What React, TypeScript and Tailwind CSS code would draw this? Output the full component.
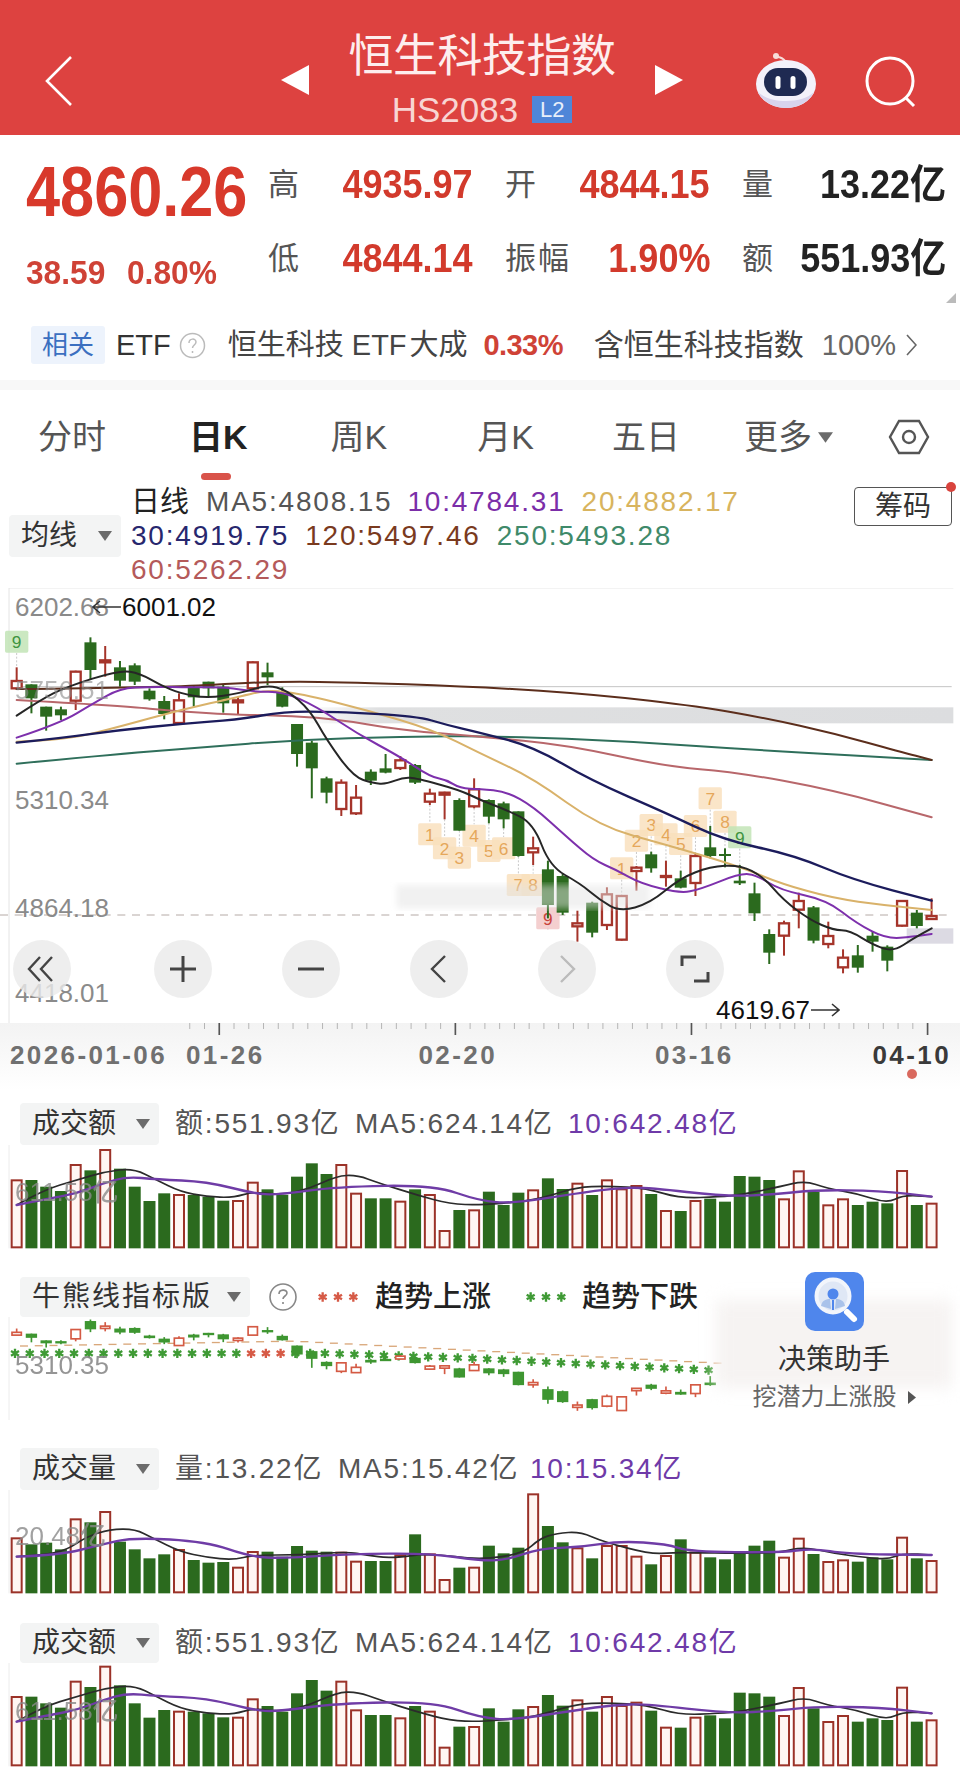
import type { ReactNode } from "react";

// Daily candles: [up, high, bodyTop, bodyBottom, low], plotted at 3 units per pixel
type Candle = [0 | 1, number, number, number, number];

const CANDLES: Candle[] = [
  [1, 232, 270, 298, 300], [0, 283, 283, 325, 370], [0, 350, 350, 380, 422], [0, 350, 358, 376, 390],
  [1, 242, 242, 335, 360], [0, 142, 157, 240, 268], [1, 168, 208, 220, 260], [0, 213, 232, 272, 290],
  [0, 220, 226, 275, 285], [0, 295, 302, 328, 332], [0, 318, 333, 372, 388], [1, 310, 328, 402, 405],
  [0, 285, 292, 322, 350], [0, 275, 275, 295, 320], [0, 285, 290, 340, 368], [1, 320, 328, 340, 372],
  [1, 214, 214, 298, 300], [0, 218, 247, 262, 285], [0, 292, 305, 350, 352], [0, 402, 402, 492, 530],
  [0, 452, 458, 535, 625], [0, 560, 565, 608, 640], [1, 568, 575, 660, 678], [1, 585, 620, 673, 675],
  [0, 538, 545, 572, 585], [0, 492, 535, 548, 550], [1, 498, 508, 537, 540], [0, 522, 525, 578, 582],
  [1, 596, 608, 638, 645], [1, 605, 605, 617, 688], [0, 625, 630, 722, 722], [1, 565, 595, 652, 655],
  [0, 628, 630, 680, 700], [0, 635, 640, 688, 715], [0, 664, 664, 798, 800], [1, 740, 772, 790, 825],
  [0, 812, 838, 945, 985], [0, 852, 858, 968, 975], [1, 962, 997, 1012, 1055], [0, 935, 938, 1028, 1042],
  [1, 892, 910, 1008, 1020], [1, 915, 915, 1052, 1052], [1, 828, 830, 846, 902], [0, 785, 793, 835, 848],
  [1, 812, 855, 862, 890], [0, 842, 865, 893, 895], [1, 790, 795, 882, 918], [0, 708, 772, 798, 805],
  [0, 775, 792, 798, 832], [0, 825, 872, 880, 885], [0, 878, 910, 970, 993], [0, 1018, 1032, 1088, 1122],
  [1, 992, 997, 1040, 1097], [1, 908, 930, 962, 1015], [0, 948, 952, 1052, 1060], [1, 995, 1035, 1065, 1075],
  [1, 1078, 1100, 1135, 1150], [0, 1065, 1096, 1133, 1148], [0, 1025, 1037, 1055, 1085], [0, 1066, 1070, 1112, 1144],
  [1, 930, 930, 1010, 1010], [0, 960, 968, 1008, 1015], [1, 925, 975, 990, 990],
];

const AMOUNT_TOPS = [
  268, 270, 290, 303, 222, 241, 177, 236, 290, 333, 310, 312, 315, 320, 332, 330,
  275, 298, 315, 260, 220, 252, 222, 308, 325, 325, 332, 298, 312, 420, 360, 358,
  305, 345, 308, 298, 265, 297, 278, 315, 268, 295, 285, 312, 360, 363, 330, 326,
  335, 258, 260, 270, 325, 241, 305, 343, 325, 345, 335, 340, 240, 345, 338,
];

const VOLUME_TOPS = [
  322, 343, 338, 358, 265, 277, 243, 335, 358, 385, 373, 357, 390, 398, 396, 410,
  363, 365, 380, 348, 362, 365, 365, 392, 393, 393, 373, 313, 370, 447, 413, 410,
  347, 370, 353, 190, 288, 337, 352, 385, 345, 345, 377, 403, 375, 328, 365, 382,
  388, 370, 347, 332, 380, 323, 372, 393, 388, 395, 382, 388, 320, 385, 390,
];

type Pt = [number, number];

const MA5: Pt[] = [[50, 377], [120, 330], [200, 290], [360, 240], [420, 250], [480, 285], [540, 310], [620, 325], [720, 310], [800, 285], [860, 300], [930, 360], [980, 450], [1060, 560], [1120, 580], [1160, 582], [1210, 562], [1250, 565], [1380, 600], [1440, 630], [1520, 660], [1600, 700], [1650, 830], [1740, 880], [1800, 930], [1860, 965], [1950, 940], [2040, 865], [2130, 830], [2220, 825], [2290, 860], [2350, 930], [2430, 990], [2500, 1020], [2550, 1022], [2620, 1065], [2680, 1085], [2740, 1045], [2795, 1015]];
const MA10: Pt[] = [[50, 443], [180, 400], [280, 340], [360, 295], [450, 290], [580, 292], [680, 292], [760, 305], [850, 305], [950, 350], [1070, 430], [1200, 500], [1290, 560], [1340, 570], [1380, 595], [1440, 597], [1520, 605], [1600, 650], [1700, 740], [1780, 810], [1850, 840], [1920, 880], [2040, 910], [2100, 898], [2220, 850], [2270, 855], [2340, 900], [2480, 930], [2570, 1000], [2660, 1047], [2740, 1040], [2795, 1032]];
const MA20: Pt[] = [[50, 455], [200, 450], [360, 410], [540, 360], [720, 320], [800, 300], [900, 310], [1100, 360], [1300, 420], [1440, 490], [1600, 565], [1800, 710], [2000, 765], [2220, 830], [2340, 880], [2500, 925], [2650, 945], [2795, 960]];
const MA30: Pt[] = [[50, 458], [180, 445], [360, 420], [540, 402], [720, 388], [850, 365], [1000, 365], [1250, 378], [1340, 405], [1440, 428], [1600, 470], [1770, 570], [2000, 670], [2170, 750], [2380, 795], [2560, 870], [2795, 932]];
const MA60: Pt[] = [[50, 330], [360, 347], [540, 365], [720, 375], [800, 375], [1000, 385], [1200, 420], [1440, 440], [1700, 465], [2000, 530], [2200, 545], [2500, 600], [2795, 682]];
const MA120: Pt[] = [[50, 297], [480, 293], [800, 275], [1000, 275], [1440, 290], [1800, 315], [2100, 350], [2300, 385], [2500, 430], [2700, 485], [2795, 510]];
const MA250: Pt[] = [[50, 521], [300, 497], [600, 472], [891, 450], [1200, 440], [1500, 438], [1900, 455], [2300, 482], [2795, 510]];

const AMOUNT_MA5: Pt[] = [[50, 345], [130, 300], [230, 270], [315, 245], [400, 235], [470, 270], [540, 305], [620, 320], [700, 323], [760, 305], [850, 315], [930, 295], [1010, 258], [1070, 255], [1140, 280], [1250, 315], [1350, 342], [1440, 345], [1570, 335], [1640, 320], [1730, 292], [1820, 288], [1940, 295], [2040, 325], [2160, 320], [2220, 315], [2340, 290], [2415, 272], [2480, 295], [2570, 310], [2660, 340], [2710, 315], [2795, 320]];
const AMOUNT_MA10: Pt[] = [[50, 345], [150, 325], [230, 310], [310, 280], [380, 260], [470, 268], [620, 275], [760, 310], [830, 315], [1010, 290], [1300, 285], [1440, 333], [1540, 340], [1730, 310], [1840, 295], [1940, 292], [2180, 320], [2340, 312], [2440, 300], [2640, 302], [2795, 320]];
const VOLUME_MA5: Pt[] = [[50, 380], [130, 375], [200, 360], [260, 320], [330, 298], [405, 297], [460, 325], [540, 365], [620, 382], [700, 390], [760, 375], [900, 375], [1040, 365], [1100, 375], [1170, 385], [1290, 370], [1440, 390], [1570, 370], [1620, 325], [1670, 310], [1740, 305], [1810, 335], [1950, 372], [2020, 368], [2080, 368], [2210, 370], [2340, 368], [2410, 350], [2500, 370], [2600, 383], [2665, 388], [2710, 370], [2795, 375]];
const VOLUME_MA10: Pt[] = [[50, 380], [180, 375], [300, 345], [400, 322], [620, 335], [750, 380], [850, 385], [1050, 372], [1290, 370], [1440, 392], [1520, 390], [1620, 355], [1740, 352], [1860, 333], [2000, 342], [2070, 365], [2340, 368], [2440, 355], [2540, 372], [2795, 375]];

// Sequence counters sitting on the candles: [candle, centre y, label, tone]
const MARKERS: [number, number, string, "amber" | "green" | "pink"][] = [
  [0, 155, "9", "green"],
  [28, 733, "1", "amber"], [29, 775, "2", "amber"], [30, 803, "3", "amber"], [31, 737, "4", "amber"],
  [32, 783, "5", "amber"], [33, 775, "6", "amber"], [34, 885, "7", "amber"], [35, 885, "8", "amber"],
  [36, 985, "9", "pink"],
  [41, 835, "1", "amber"], [42, 752, "2", "amber"], [43, 705, "3", "amber"], [44, 733, "4", "amber"],
  [45, 762, "5", "amber"], [46, 708, "6", "amber"], [47, 625, "7", "amber"], [48, 695, "8", "amber"],
  [49, 742, "9", "green"],
];

const TONES = {
  amber: { fill: "#f9dfbc", text: "#e5a75b" },
  green: { fill: "#bfe3b3", text: "#3f9440" },
  pink: { fill: "#f2c4c4", text: "#c8443a" },
};

const RED = "#a5342a";
const GREEN = "#2b6a1e";

const xAt = (i: number) => 50 + 44.27 * i;

function smooth(points: Pt[]) {
  let d = `M${points[0][0]} ${points[0][1]}`;
  for (let i = 1; i < points.length - 1; i++) {
    const mx = (points[i][0] + points[i + 1][0]) / 2;
    const my = (points[i][1] + points[i + 1][1]) / 2;
    d += ` Q${points[i][0]} ${points[i][1]} ${mx} ${my}`;
  }
  const last = points[points.length - 1];
  return `${d} L${last[0]} ${last[1]}`;
}

function Line({ points, color, width = 6 }: { points: Pt[]; color: string; width?: number }) {
  return <path d={smooth(points)} fill="none" stroke={color} strokeWidth={width} strokeLinejoin="round" strokeLinecap="round" />;
}

function Caret({ className = "" }: { className?: string }) {
  return (
    <svg className={className} viewBox="0 0 14 10" fill="#6b6b6b">
      <path d="M0 0h14L7 10z" />
    </svg>
  );
}

function DropTag({ label, className }: { label: string; className: string }) {
  return (
    <div className={`flex items-center bg-[#f3f4f4] rounded-[4px] text-[#333] text-[28px] leading-none ${className}`}>
      <span className="ml-[12px]">{label}</span>
      <Caret className="w-[14px] h-[10px] ml-auto mr-[9px]" />
    </div>
  );
}

function NavCircle({ children, className = "" }: { children: ReactNode; className?: string }) {
  return (
    <div className={`w-[58px] h-[58px] rounded-full bg-[#eaeaea]/80 flex items-center justify-center ${className}`}>
      <svg className="w-[34px] h-[34px]" viewBox="0 0 34 34" fill="none" stroke="currentColor" strokeWidth="2.4">
        {children}
      </svg>
    </div>
  );
}

function AxisLabel({ className, children }: { className: string; children: ReactNode }) {
  return <span className={`absolute left-[15px] text-[26px] leading-none font-medium text-[#8a8a8a] ${className}`}>{children}</span>;
}

function Star({ x, y, color }: { x: number; y: number; color: string }) {
  return (
    <path
      d={`M${x} ${y - 14}V${y + 14}M${x - 12} ${y - 7}L${x + 12} ${y + 7}M${x - 12} ${y + 7}L${x + 12} ${y - 7}`}
      stroke={color}
      strokeWidth="7"
    />
  );
}

function Legend({ color }: { color: string }) {
  return (
    <svg className="w-[42px] h-[14px]" viewBox="0 0 126 42">
      <Star x={17} y={21} color={color} />
      <Star x={63} y={21} color={color} />
      <Star x={109} y={21} color={color} />
    </svg>
  );
}

function MainChart() {
  return (
    <svg className="block w-[960px] h-[435px]" viewBox="0 -6 2880 1305">
      <defs>
        <linearGradient id="band" x1="0" x2="1" y1="0" y2="0">
          <stop offset="0" stopColor="#dfe0e1" stopOpacity="0" />
          <stop offset="0.12" stopColor="#dfe0e1" />
          <stop offset="1" stopColor="#dcdddf" />
        </linearGradient>
        <filter id="soft">
          <feGaussianBlur stdDeviation="10" />
        </filter>
      </defs>
      <path d="M27 -6H2860" stroke="#e8e8e8" strokeWidth="3" />
      <path d="M27 -6V1299" stroke="#e4e4e4" strokeWidth="3" />
      <path d="M50 290H2855" stroke="#c4c4c4" strokeWidth="3" />
      <rect x="900" y="352" width="1960" height="48" fill="url(#band)" />
      <rect x="2720" y="1015" width="140" height="46" fill="#dcdae3" />
      <path d="M0 975H2840" stroke="#b5aaa6" strokeWidth="3" strokeDasharray="24 20" />

      {MARKERS.map(([i, y, label, tone]) => {
        const c = CANDLES[i];
        const below = y > c[4];
        return (
          <g key={`${i}-${y}`}>
            <path
              d={below ? `M${xAt(i)} ${c[4]}V${y - 34}` : `M${xAt(i)} ${y + 34}V${c[1]}`}
              stroke="#c9c9c9"
              strokeWidth="3"
              strokeDasharray="6 5"
            />
            <rect x={xAt(i) - 35} y={y - 33} width="70" height="66" rx="5" fill={TONES[tone].fill} fillOpacity="0.82" />
            <text x={xAt(i)} y={y + 19} textAnchor="middle" fontSize="52" fill={TONES[tone].text}>
              {label}
            </text>
          </g>
        );
      })}

      {CANDLES.map(([up, high, top, bottom, low], i) => {
        const x = xAt(i);
        const color = up ? RED : GREEN;
        return (
          <g key={i}>
            <path d={`M${x} ${high}V${low}`} stroke={color} strokeWidth="6" />
            {up ? (
              <rect x={x - 15} y={top + 3} width="30" height={Math.max(bottom - top - 6, 3)} fill="#fff" stroke={color} strokeWidth="7" />
            ) : (
              <rect x={x - 18} y={top} width="36" height={bottom - top} fill={color} />
            )}
          </g>
        );
      })}

      <rect x="1190" y="885" width="760" height="70" fill="#e4e4e4" fillOpacity="0.5" filter="url(#soft)" />

      <Line points={MA250} color="#2f6f5b" />
      <Line points={MA120} color="#5c2e1c" />
      <Line points={MA60} color="#b8676b" />
      <Line points={MA20} color="#d9b26a" />
      <Line points={MA30} color="#1c1c5c" width={7} />
      <Line points={MA10} color="#7d30ac" />
      <Line points={MA5} color="#262626" />
    </svg>
  );
}

function Ruler() {
  return (
    <svg className="block w-[960px] h-[14px]" viewBox="0 0 2880 42">
      {CANDLES.map((_, i) => {
        if (i < 12) return null;
        const major = (i - 14) % 16 === 0 || i === 62;
        return <path key={i} d={`M${xAt(i) - 12} 0V${major ? 36 : 18}`} stroke={major ? "#555" : "#b5b5b5"} strokeWidth={major ? 5 : 3} />;
      })}
    </svg>
  );
}

function BarChart({ tops, ma5, ma10, viewY, className }: { tops: number[]; ma5: Pt[]; ma10: Pt[]; viewY: number; className: string }) {
  const base = viewY + 310;
  return (
    <svg className={`block w-[960px] ${className}`} viewBox={`0 ${viewY} 2880 330`}>
      <path d={`M27 ${viewY}V${base}`} stroke="#ececec" strokeWidth="3" />
      {tops.map((top, i) => {
        const up = CANDLES[i][0] === 1;
        return up ? (
          <rect key={i} x={xAt(i) - 15} y={top + 3} width="30" height={base - top - 6} fill="#fff6f3" stroke="#9b3228" strokeWidth="6" />
        ) : (
          <rect key={i} x={xAt(i) - 18} y={top} width="36" height={base - top} fill={GREEN} />
        );
      })}
      <Line points={ma5} color="#2b2b2b" width={5} />
      <Line points={ma10} color="#6f3ca6" width={7} />
    </svg>
  );
}

// Bull/bear strip reuses the daily candles, squeezed into a narrow band
function TrendStrip() {
  const my = (y: number) => 730 + (y - 280) * 0.3;
  const starY = (i: number) => (i < 22 ? 790 : i < 32 ? 790 + (i - 21) * 1.5 : 805 + (i - 31) * 2.2);
  const dashY = (i: number) => (i < 19 ? 768 - i * 0.8 : 755 + (i - 19) * 2.3);
  return (
    <svg className="block w-[960px] h-[120px]" viewBox="0 681 2880 360">
      <path d="M27 681V990" stroke="#ececec" strokeWidth="3" />
      {CANDLES.slice(0, 48).map((_, i) => (
        <path key={i} d={`M${xAt(i) + 10} ${dashY(i)}h24`} stroke="#d9a77a" strokeWidth="4" />
      ))}
      {CANDLES.slice(0, 48).map((_, i) => (
        <Star key={i} x={xAt(i) - 5} y={starY(i)} color={i >= 16 && i <= 18 ? "#d65a46" : "#3f9a35"} />
      ))}
      {CANDLES.slice(0, 48).map(([up, high, top, bottom, low], i) => {
        const x = xAt(i);
        const color = up ? "#d45a44" : "#3e9631";
        const t = my(top);
        const h = Math.max(my(bottom) - t, 7);
        return (
          <g key={i}>
            <path d={`M${x} ${my(high)}V${my(low)}`} stroke={color} strokeWidth="5" />
            {up ? (
              <rect x={x - 14} y={t} width="28" height={h} fill="#fff" stroke={color} strokeWidth="5" />
            ) : (
              <rect x={x - 17} y={t} width="34" height={h} fill={color} />
            )}
          </g>
        );
      })}
    </svg>
  );
}

function RobotIcon() {
  return (
    <svg className="w-[62px] h-[56px]" viewBox="0 0 62 56">
      <circle cx="21" cy="4" r="3" fill="#f7dcd8" />
      <path d="M22 5c3 0 6 1 9 5" stroke="#f7dcd8" strokeWidth="2" fill="none" />
      <ellipse cx="31" cy="32" rx="30" ry="24" fill="#f3f1fa" />
      <path d="M3 40c4 9 15 16 28 16s24-7 28-16c-6 6-16 9-28 9S9 46 3 40z" fill="#d8d3ec" />
      <rect x="9" y="16" width="43" height="28" rx="14" fill="#1f2a52" />
      <rect x="20.5" y="24" width="5" height="13" rx="2.5" fill="#fff" />
      <rect x="35.5" y="24" width="5" height="13" rx="2.5" fill="#fff" />
    </svg>
  );
}

function AssistantIcon() {
  return (
    <svg className="w-[59px] h-[59px]" viewBox="0 0 59 59">
      <rect width="59" height="59" rx="10" fill="#4f86ec" />
      <circle cx="28" cy="24" r="16.5" fill="#dfe7f5" stroke="#f2f5fb" strokeWidth="4" />
      <circle cx="28" cy="22" r="5.5" fill="#4f86ec" />
      <path d="M16 34c1-5 4-7 9-7l1 10zM40 34c-1-5-4-7-9-7l-1 10z" fill="#a9c2ea" />
      <path d="M28 28v10" stroke="#4f86ec" strokeWidth="2" />
      <path d="M42 40l7 7" stroke="#fff" strokeWidth="6" strokeLinecap="round" />
    </svg>
  );
}

const NUM = "inline-block origin-right scale-x-[.9] text-[40px] leading-none font-bold whitespace-nowrap";

function StatCell({ label, value, dark }: { label: string; value: string; dark?: boolean }) {
  return (
    <div className="flex items-center justify-between">
      <span className="text-[31px] leading-none text-[#555]">{label}</span>
      <span className={`${NUM} ${dark ? "text-[#222]" : "text-[#d23a2c]"}`}>{value}</span>
    </div>
  );
}

function InfoText({ className, children }: { className: string; children: ReactNode }) {
  return <span className={`text-[28px] leading-none tracking-[1.8px] whitespace-nowrap ${className}`}>{children}</span>;
}

export default function App() {
  return (
    <div className="relative w-[960px] h-[1789px] overflow-hidden bg-white font-['Liberation_Sans','Noto_Sans_CJK_SC',sans-serif]">
      {/* Title bar */}
      <header className="relative h-[135px] bg-[#dd4240] text-white">
        <svg className="absolute left-[44px] top-[55px] w-[30px] h-[52px]" viewBox="0 0 30 52" fill="none" stroke="#fff" strokeWidth="2.6">
          <path d="M27 2L3 26l24 24" />
        </svg>
        <div className="flex justify-center items-start pt-[34px] gap-[37px] w-[666px] ml-[149px]">
          <svg className="w-[28px] h-[30px] mt-[31px]" viewBox="0 0 28 30" fill="#fff">
            <path d="M28 0v30L0 15z" />
          </svg>
          <div className="flex flex-col items-center w-[272px]">
            <div className="text-[45px] leading-[46px] text-[#fdeeee] tracking-[-0.5px] whitespace-nowrap">恒生科技指数</div>
            <div className="flex items-center mt-[16px] h-[27px]">
              <span className="text-[35px] leading-none text-[#f8d5d3]">HS2083</span>
              <span className="ml-[14px] w-[40px] h-[27px] bg-[#4f86d8] text-[#e8effa] text-[22px] leading-[27px] text-center">L2</span>
            </div>
          </div>
          <svg className="w-[28px] h-[30px] mt-[31px]" viewBox="0 0 28 30" fill="#fff">
            <path d="M0 0v30l28-15z" />
          </svg>
        </div>
        <div className="absolute left-[755px] top-[52px]">
          <RobotIcon />
        </div>
        <svg className="absolute left-[864px] top-[55px] w-[54px] h-[54px]" viewBox="0 0 54 54" fill="none" stroke="#fff" strokeWidth="3">
          <circle cx="26" cy="26" r="23" />
          <path d="M41 42l9 9" />
        </svg>
      </header>

      {/* Quote summary */}
      <section className="relative flex h-[175px]">
        <div className="w-[268px] pl-[26px]">
          <div className="mt-[27px] inline-block origin-left scale-x-[.875] text-[70px] leading-[60px] font-bold text-[#d8392b] whitespace-nowrap">4860.26</div>
          <div className="flex mt-[33px] text-[33px] leading-none text-[#cf4236] font-bold">
            <span className="inline-block origin-left scale-x-[.96]">38.59</span>
            <span className="ml-[18px] inline-block origin-left scale-x-[.96]">0.80%</span>
          </div>
        </div>
        <div className="grid grid-cols-[205px_205px_204px] gap-x-[32px] auto-rows-[74px] mt-[12px]">
          <StatCell label="高" value="4935.97" />
          <StatCell label="开" value="4844.15" />
          <StatCell label="量" value="13.22亿" dark />
          <StatCell label="低" value="4844.14" />
          <div className="flex items-center justify-between">
            <span className="text-[31px] leading-none text-[#555] tracking-[2px]">振幅</span>
            <span className={`${NUM} text-[#d23a2c]`}>1.90%</span>
          </div>
          <StatCell label="额" value="551.93亿" dark />
        </div>
        <svg className="absolute left-[946px] top-[158px] w-[10px] h-[10px]" viewBox="0 0 10 10" fill="#bbb">
          <path d="M10 0v10H0z" />
        </svg>
      </section>

      {/* Related ETF row */}
      <section className="flex items-center h-[38px] mt-[16px] ml-[31px] text-[29px] leading-none text-[#444] whitespace-nowrap">
        <span className="flex items-center justify-center w-[74px] h-[38px] bg-[#edf3fc] rounded-[3px] text-[26px] text-[#3b6fc0]">相关</span>
        <span className="ml-[11px] text-[#333]">ETF</span>
        <svg className="ml-[8px] w-[27px] h-[27px]" viewBox="0 0 27 27" fill="none" stroke="#bbb" strokeWidth="1.5">
          <circle cx="13.5" cy="13.5" r="12" />
          <path d="M10 11c0-5 7-5 7-1 0 3-3.5 3-3.5 6M13.5 19v2" />
        </svg>
        <span className="ml-[22px]">恒生科技</span>
        <span className="ml-[8px]">ETF</span>
        <span className="ml-[3px]">大成</span>
        <span className="ml-[16px] text-[#cf4236] font-bold tracking-[-0.6px]">0.33%</span>
        <span className="ml-[31px] text-[30px]">含恒生科技指数</span>
        <span className="ml-[18px] text-[#666]">100%</span>
        <svg className="ml-[10px] w-[11px] h-[22px]" viewBox="0 0 11 22" fill="none" stroke="#666" strokeWidth="1.6">
          <path d="M1 1l9 10-9 10" />
        </svg>
      </section>

      <div className="h-[10px] mt-[16px] bg-[#f8f8f8]" />

      {/* Period tabs */}
      <nav className="relative flex items-center h-[70px] mt-[12px] text-[34px] leading-none text-[#555]">
        <span className="ml-[38px]">分时</span>
        <span className="ml-[83px] font-bold text-[#222]">日K</span>
        <span className="ml-[83px]">周K</span>
        <span className="ml-[90px]">月K</span>
        <span className="ml-[78px]">五日</span>
        <span className="ml-[64px]">更多</span>
        <Caret className="w-[15px] h-[11px] ml-[6px]" />
        <svg className="ml-[55px] w-[42px] h-[36px]" viewBox="0 0 42 36" fill="none" stroke="#555" strokeWidth="2.4">
          <path d="M11 2h20l9 16-9 16H11L2 18z" />
          <circle cx="21" cy="18" r="6" />
        </svg>
        <div className="absolute left-[201px] top-[71px] w-[30px] h-[7px] rounded-full bg-[#d9534a]" />
      </nav>

      {/* Moving average legend */}
      <section className="relative h-[107px] mt-[9px]">
        <div className="absolute left-[9px] top-[34px]">
          <DropTag label="均线" className="w-[112px] h-[42px]" />
        </div>
        <div className="ml-[131px] pt-[8px] flex flex-col gap-[8px]">
          <div className="flex items-center h-[26px]">
            <span className="text-[29px] leading-none text-[#222]">日线</span>
            <InfoText className="ml-[17px] text-[#555]">MA5:4808.15</InfoText>
            <InfoText className="ml-[15px] text-[#7b2ea8]">10:4784.31</InfoText>
            <InfoText className="ml-[16px] text-[#d8b45e]">20:4882.17</InfoText>
          </div>
          <div className="flex items-center h-[26px]">
            <InfoText className="text-[#27276e]">30:4919.75</InfoText>
            <InfoText className="ml-[16px] text-[#7a3a1e]">120:5497.46</InfoText>
            <InfoText className="ml-[16px] text-[#3f8a6a]">250:5493.28</InfoText>
          </div>
          <div className="flex items-center h-[26px]">
            <InfoText className="text-[#b45a5a]">60:5262.29</InfoText>
          </div>
        </div>
        <button className="absolute left-[854px] top-[6px] w-[98px] h-[39px] border border-[#555] rounded-[4px] text-[28px] leading-none text-[#333]">筹码</button>
        <div className="absolute left-[946px] top-[1px] w-[10px] h-[10px] rounded-full bg-[#d9433d]" />
      </section>

      {/* Daily candle chart with its overlays */}
      <section className="relative h-[435px]">
        <MainChart />
        <AxisLabel className="top-[6px]">6202.68</AxisLabel>
        <AxisLabel className="top-[89px] opacity-60">5756.51</AxisLabel>
        <AxisLabel className="top-[199px]">5310.34</AxisLabel>
        <AxisLabel className="top-[307px]">4864.18</AxisLabel>
        <AxisLabel className="top-[392px]">4418.01</AxisLabel>
        <div className="absolute left-[92px] top-[6px] flex items-center text-[26px] leading-none font-medium text-[#111] whitespace-nowrap">
          <svg className="w-[29px] h-[14px]" viewBox="0 0 29 14" fill="none" stroke="#333" strokeWidth="1.6">
            <path d="M29 7H1M8 1L1 7l7 6" />
          </svg>
          <span className="ml-[1px]">6001.02</span>
        </div>
        <div className="absolute left-[716px] top-[409px] flex items-center text-[26px] leading-none font-medium text-[#111] whitespace-nowrap">
          <span>4619.67</span>
          <svg className="ml-[1px] w-[29px] h-[14px]" viewBox="0 0 29 14" fill="none" stroke="#333" strokeWidth="1.6">
            <path d="M0 7h28M21 1l7 6-7 6" />
          </svg>
        </div>
        <div className="absolute left-[13px] top-[352px] flex gap-[70px] text-[#444]">
          <NavCircle className="mr-[13px]">
            <path d="M15 5L4 17l11 12M27 5L16 17l11 12" />
          </NavCircle>
          <NavCircle>
            <path d="M17 4v26M4 17h26" strokeWidth="3" />
          </NavCircle>
          <NavCircle>
            <path d="M4 17h26" strokeWidth="3" />
          </NavCircle>
          <NavCircle>
            <path d="M23 4L10 17l13 13" />
          </NavCircle>
          <NavCircle className="text-[#bbb]">
            <path d="M11 4l13 13-13 13" />
          </NavCircle>
          <NavCircle>
            <path d="M4 14V5h14M30 20v9H16" strokeWidth="3" />
          </NavCircle>
        </div>
      </section>

      {/* Date axis */}
      <section className="relative h-[67px] bg-gradient-to-b from-[#f3f3f3] to-white">
        <Ruler />
        <div className="flex items-center h-[34px] mt-[1px] text-[26px] leading-none tracking-[2.4px] font-bold text-[#707070] whitespace-nowrap">
          <span className="ml-[10px]">2026-01-06</span>
          <span className="ml-[19px]">01-26</span>
          <span className="ml-[154px]">02-20</span>
          <span className="ml-[158px]">03-16</span>
          <span className="ml-[139px] text-[#3a3a3a]">04-10</span>
        </div>
        <div className="absolute left-[907px] top-[46px] w-[10px] h-[10px] rounded-full bg-[#d9695e]" />
      </section>

      {/* Turnover */}
      <section className="relative pt-[13px] h-[165px]">
        <div className="flex items-center h-[42px]">
          <DropTag label="成交额" className="ml-[20px] w-[139px] h-[42px]" />
          <InfoText className="ml-[16px] w-[180px] text-[#555]">额:551.93亿</InfoText>
          <InfoText className="w-[213px] text-[#555]">MA5:624.14亿</InfoText>
          <InfoText className="text-[#6f3aa8]">10:642.48亿</InfoText>
        </div>
        <BarChart tops={AMOUNT_TOPS} ma5={AMOUNT_MA5} ma10={AMOUNT_MA10} viewY={165} className="h-[110px]" />
        <AxisLabel className="top-[89px] opacity-80">611.58亿</AxisLabel>
      </section>

      {/* Bull/bear trend strip */}
      <section className="relative pt-[22px] h-[182px]">
        <div className="flex items-center h-[40px]">
          <DropTag label="牛熊线指标版" className="ml-[20px] w-[230px] h-[40px] tracking-[2px]" />
          <svg className="ml-[19px] w-[28px] h-[28px]" viewBox="0 0 28 28" fill="none" stroke="#888" strokeWidth="1.6">
            <circle cx="14" cy="14" r="13" />
            <path d="M10 11c0-5 8-5 8-1 0 3-4 3-4 6M14 19v2" />
          </svg>
          <div className="ml-[20px]">
            <Legend color="#d65a46" />
          </div>
          <span className="ml-[16px] text-[29px] leading-none font-medium text-[#222]">趋势上涨</span>
          <div className="ml-[34px]">
            <Legend color="#3f9a35" />
          </div>
          <span className="ml-[15px] text-[29px] leading-none font-medium text-[#222]">趋势下跌</span>
        </div>
        <TrendStrip />
        <AxisLabel className="top-[97px] opacity-90">5310.35</AxisLabel>
        <div className="absolute left-[716px] top-[17px] w-[236px] h-[160px] flex flex-col items-center">
          <div className="absolute left-0 right-0 top-[28px] h-[88px] bg-[#f6f3f2] blur-[8px]" />
          <div className="relative">
            <AssistantIcon />
          </div>
          <span className="relative mt-[14px] text-[28px] leading-[30px] text-[#333]">决策助手</span>
          <div className="relative flex items-center mt-[8px]">
            <span className="text-[24px] leading-[28px] text-[#666]">挖潜力上涨股</span>
            <svg className="ml-[11px] w-[8px] h-[13px]" viewBox="0 0 8 13" fill="#555">
              <path d="M0 0l8 6.5L0 13z" />
            </svg>
          </div>
        </div>
      </section>

      {/* Volume */}
      <section className="relative pt-[11px] h-[163px]">
        <div className="flex items-center h-[42px]">
          <DropTag label="成交量" className="ml-[20px] w-[139px] h-[42px]" />
          <InfoText className="ml-[16px] w-[163px] text-[#555]">量:13.22亿</InfoText>
          <InfoText className="w-[192px] text-[#555]">MA5:15.42亿</InfoText>
          <InfoText className="text-[#6f3aa8]">10:15.34亿</InfoText>
        </div>
        <BarChart tops={VOLUME_TOPS} ma5={VOLUME_MA5} ma10={VOLUME_MA10} viewY={180} className="h-[110px]" />
        <AxisLabel className="top-[86px] opacity-80">20.48亿</AxisLabel>
      </section>

      {/* Turnover, repeated as the last indicator */}
      <section className="relative pt-[23px]">
        <div className="flex items-center h-[40px]">
          <DropTag label="成交额" className="ml-[20px] w-[139px] h-[40px]" />
          <InfoText className="ml-[16px] w-[180px] text-[#555]">额:551.93亿</InfoText>
          <InfoText className="w-[213px] text-[#555]">MA5:624.14亿</InfoText>
          <InfoText className="text-[#6f3aa8]">10:642.48亿</InfoText>
        </div>
        <BarChart tops={AMOUNT_TOPS} ma5={AMOUNT_MA5} ma10={AMOUNT_MA10} viewY={169} className="h-[110px]" />
        <AxisLabel className="top-[98px] opacity-80">611.58亿</AxisLabel>
      </section>
    </div>
  );
}
